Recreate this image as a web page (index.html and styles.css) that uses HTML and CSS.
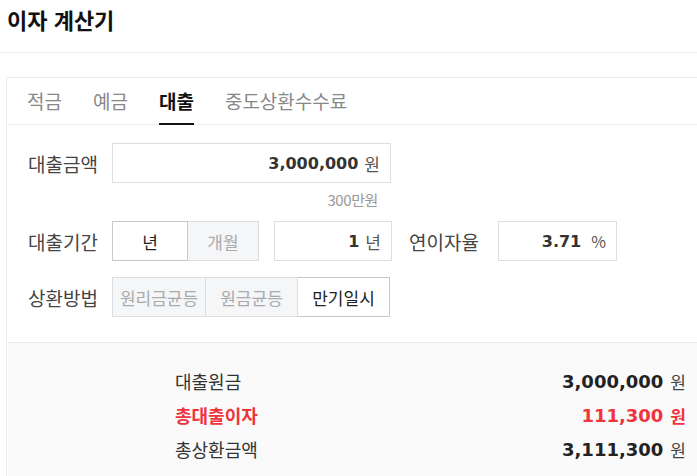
FILE: index.html
```html
<!DOCTYPE html>
<html lang="ko">
<head>
<meta charset="utf-8">
<title>이자 계산기</title>
<link rel="stylesheet" href="styles.css">
</head>
<body>
  <header class="page-header">
    <h1 class="page-title">이자 계산기</h1>
  </header>

  <section class="calc-card">
    <nav class="tabs">
      <span class="tab">적금</span>
      <span class="tab">예금</span>
      <span class="tab tab-active">대출</span>
      <span class="tab">중도상환수수료</span>
    </nav>

    <div class="form">
      <div class="row">
        <span class="label">대출금액</span>
        <div class="field field-wide">
          <span class="num">3,000,000</span><span class="unit">원</span>
        </div>
      </div>
      <div class="helper">300만원</div>

      <div class="row row-gap">
        <span class="label">대출기간</span>
        <div class="seg seg-period">
          <span class="seg-btn seg-on seg-year">년</span>
          <span class="seg-btn seg-off seg-month">개월</span>
        </div>
        <div class="field field-term">
          <span class="num">1</span><span class="unit">년</span>
        </div>
        <span class="label label-rate">연이자율</span>
        <div class="field field-rate">
          <span class="num">3.71</span><span class="unit unit-pct">%</span>
        </div>
      </div>

      <div class="row">
        <span class="label">상환방법</span>
        <div class="seg seg-method">
          <span class="seg-btn seg-off">원리금균등</span>
          <span class="seg-btn seg-off">원금균등</span>
          <span class="seg-btn seg-on">만기일시</span>
        </div>
      </div>
    </div>

    <div class="result">
      <div class="result-row">
        <span class="r-label">대출원금</span>
        <span class="r-value"><b class="r-num">3,000,000</b><span class="r-unit">원</span></span>
      </div>
      <div class="result-row result-red">
        <span class="r-label">총대출이자</span>
        <span class="r-value"><b class="r-num">111,300</b><span class="r-unit">원</span></span>
      </div>
      <div class="result-row">
        <span class="r-label">총상환금액</span>
        <span class="r-value"><b class="r-num">3,111,300</b><span class="r-unit">원</span></span>
      </div>
    </div>
  </section>
</body>
</html>
```

FILE: styles.css
```css
html, body {
  margin: 0;
  padding: 0;
  background: #ffffff;
  overflow: hidden;
}

body {
  font-family: "Noto Sans CJK KR", "Noto Sans", sans-serif;
  color: #333;
  width: 697px;
  height: 476px;
}

.page-header {
  height: 52px;
  border-bottom: 1px solid #ececec;
  display: flex;
  align-items: center;
  padding-left: 7px;
  box-sizing: content-box;
}

.page-title {
  margin: 0;
  font-size: 22px;
  font-weight: 700;
  color: #111;
  line-height: 26px;
  margin-top: -14px;
}

.calc-card {
  margin: 24px 0 0 6px;
  border-top: 1px solid #ebebeb;
  border-left: 1px solid #ebebeb;
  padding-left: 1px;
}

.tabs {
  display: flex;
  height: 46px;
  align-items: center;
  border-bottom: 1px solid #ebebeb;
  padding-left: 19px;
  gap: 31px;
}

.tab {
  font-size: 19px;
  color: #888;
  line-height: 46px;
  height: 46px;
  box-sizing: border-box;
}

.tab-active {
  color: #111;
  font-weight: 700;
  border-bottom: 2px solid #111;
  margin-bottom: -1px;
  height: 47px;
}

.form {
  padding: 18px 0 25px 20px;
}

.row {
  display: flex;
  align-items: center;
  height: 40px;
}

.row-gap {
  margin-bottom: 16px;
}

.label {
  width: 84px;
  font-size: 19px;
  color: #444;
  flex: none;
}

.label-rate {
  width: 89px;
  margin-left: 17px;
}

.field {
  height: 40px;
  box-sizing: border-box;
  border: 1px solid #dedede;
  display: flex;
  align-items: center;
  justify-content: flex-end;
  padding-right: 10px;
  background: #fff;
}

.field-wide { width: 279px; }
.field-term { width: 118px; margin-left: 15px; }
.field-rate { width: 119px; }

.num {
  font-family: "DejaVu Sans", sans-serif;
  font-weight: 700;
  font-size: 16px;
  color: #333;
}

.unit {
  font-size: 17px;
  color: #555;
  margin-left: 6px;
}

.unit-pct {
  margin-left: 10px;
  font-size: 16px;
}

.helper {
  width: 360px;
  box-sizing: border-box;
  text-align: right;
  padding: 7px 10px 0 0;
  height: 38px;
  line-height: 20px;
  font-size: 15px;
  letter-spacing: -0.4px;
  color: #999;
}

.seg {
  display: flex;
  height: 40px;
}

.seg-btn {
  display: flex;
  align-items: center;
  justify-content: center;
  box-sizing: border-box;
  height: 40px;
  border: 1px solid #d8d8d8;
  font-size: 17px;
}

.seg-btn + .seg-btn {
  border-left: none;
}

.seg-on {
  background: #fff;
  color: #222;
  border-color: #c8c8c8;
}

.seg-off {
  background: #f5f6f8;
  color: #aaa;
  border-color: #dcdde0;
}

.seg-year { width: 76px; }
.seg-month { width: 71px; }

.seg-method { width: 278px; }
.seg-method .seg-btn { flex: 1; }
.seg-method .seg-btn:first-child { flex: 0 0 94px; }

.result {
  background: #fafafa;
  border-top: 1px solid #ebebeb;
  padding: 21px 11px 20px 167px;
}

.result-row {
  display: flex;
  justify-content: space-between;
  align-items: center;
  height: 34px;
}

.r-label {
  font-size: 18px;
  color: #333;
}

.r-value {
  display: flex;
  align-items: center;
}

.r-num {
  font-family: "DejaVu Sans", sans-serif;
  font-weight: 700;
  font-size: 18px;
  color: #222;
}

.r-unit {
  font-size: 17px;
  color: #444;
  margin-left: 7px;
}

.result-red .r-label,
.result-red .r-num,
.result-red .r-unit {
  color: #f0333c;
  font-weight: 700;
}
```
